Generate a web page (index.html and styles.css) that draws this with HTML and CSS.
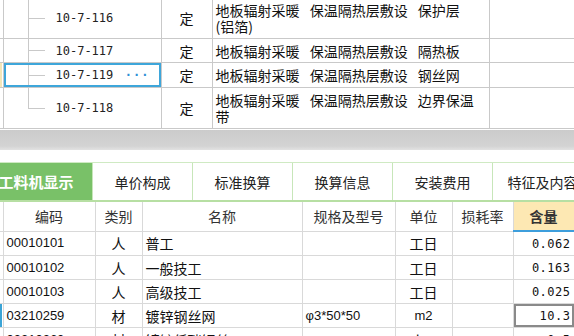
FILE: index.html
```html
<!DOCTYPE html>
<html lang="zh-CN">
<head>
    <meta charset="UTF-8">
    <title>定额子目</title>
    <link rel="stylesheet" href="styles.css">
</head>
<body>
    <table class="quota">
        <colgroup>
            <col class="c-mark"><col class="c-code"><col class="c-type"><col class="c-name"><col class="c-rest">
        </colgroup>
        <tr class="tall">
            <td class="mark"></td>
            <td class="code">10-7-116</td>
            <td class="type">定</td>
            <td class="name">地板辐射采暖 保温隔热层敷设 保护层<br>(铝箔)</td>
            <td></td>
        </tr>
        <tr class="r24">
            <td class="mark"></td>
            <td class="code">10-7-117</td>
            <td class="type">定</td>
            <td class="name">地板辐射采暖 保温隔热层敷设 隔热板</td>
            <td></td>
        </tr>
        <tr class="r25 current">
            <td class="mark"></td>
            <td class="code"><div class="code-box"><span>10-7-119</span><span class="more">···</span></div></td>
            <td class="type">定</td>
            <td class="name">地板辐射采暖 保温隔热层敷设 钢丝网</td>
            <td></td>
        </tr>
        <tr class="tall last">
            <td class="mark"></td>
            <td class="code">10-7-118</td>
            <td class="type">定</td>
            <td class="name">地板辐射采暖 保温隔热层敷设 边界保温<br>带</td>
            <td></td>
        </tr>
    </table>

    <div class="splitter"></div>

    <div class="tabs">
        <div class="tab active first">工料机显示</div>
        <div class="tab">单价构成</div>
        <div class="tab">标准换算</div>
        <div class="tab">换算信息</div>
        <div class="tab">安装费用</div>
        <div class="tab">特征及内容</div>
    </div>

    <table class="res">
        <colgroup>
            <col class="k-mark"><col class="k-code"><col class="k-type"><col class="k-name"><col class="k-spec"><col class="k-unit"><col class="k-loss"><col class="k-qty">
        </colgroup>
        <tr class="head">
            <td class="mark"></td>
            <td>编码</td>
            <td>类别</td>
            <td>名称</td>
            <td>规格及型号</td>
            <td>单位</td>
            <td>损耗率</td>
            <td class="qty-head">含量</td>
        </tr>
        <tr>
            <td class="mark"></td>
            <td class="num">00010101</td>
            <td class="mid">人</td>
            <td>普工</td>
            <td></td>
            <td class="mid">工日</td>
            <td></td>
            <td class="qty">0.062</td>
        </tr>
        <tr>
            <td class="mark"></td>
            <td class="num">00010102</td>
            <td class="mid">人</td>
            <td>一般技工</td>
            <td></td>
            <td class="mid">工日</td>
            <td></td>
            <td class="qty">0.163</td>
        </tr>
        <tr>
            <td class="mark"></td>
            <td class="num">00010103</td>
            <td class="mid">人</td>
            <td>高级技工</td>
            <td></td>
            <td class="mid">工日</td>
            <td></td>
            <td class="qty">0.025</td>
        </tr>
        <tr>
            <td class="mark on"></td>
            <td class="num">03210259</td>
            <td class="mid">材</td>
            <td>镀锌钢丝网</td>
            <td class="num">φ3*50*50</td>
            <td class="mid num">m2</td>
            <td></td>
            <td class="qty picked">10.3</td>
        </tr>
        <tr>
            <td class="mark"></td>
            <td class="num">03210260</td>
            <td class="mid">材</td>
            <td>镀锌低碳钢丝</td>
            <td></td>
            <td class="mid">kg</td>
            <td></td>
            <td class="qty">0.5</td>
        </tr>
    </table>
</body>
</html>
```

FILE: styles.css
```css
body {
    margin: 0;
    width: 574px;
    height: 336px;
    overflow: hidden;
    background: #ffffff;
    font-family: "Noto Sans CJK SC", "DejaVu Sans", sans-serif;
    font-size: 14px;
    color: #111111;
}

table {
    border-collapse: collapse;
    table-layout: fixed;
}

td {
    padding: 0 3px;
    white-space: nowrap;
    overflow: hidden;
}

/* upper grid: quota items */
.quota {
    width: 590px;
    margin-top: -3px;
}

.quota td {
    border: 1px solid #c9c9c9;
    line-height: 16px;
}

.quota td.mark {
    border-left: none;
    padding: 0;
}

.c-mark { width: 3px; }
.c-code { width: 158px; }
.c-type { width: 51px; }
.c-name { width: 277px; }
.c-rest { width: 101px; }

.quota tr.tall { height: 41px; }
.quota tr.r24 { height: 24px; }
.quota tr.r25 { height: 25px; }

.quota td.code {
    font-family: "DejaVu Sans Mono", monospace;
    font-size: 12px;
    color: #222222;
    padding-left: 52px;
    background:
        linear-gradient(#c9c9c9, #c9c9c9) 24px 0 / 1px 100% no-repeat,
        linear-gradient(#c9c9c9, #c9c9c9) 24px 50% / 17px 1px no-repeat;
}

.quota tr.last td.code {
    background:
        linear-gradient(#c9c9c9, #c9c9c9) 24px 0 / 1px 50% no-repeat,
        linear-gradient(#c9c9c9, #c9c9c9) 24px 50% / 17px 1px no-repeat;
}

.quota tr.current td.code {
    box-shadow: inset 0 0 0 2px #3ea6da;
}

.quota tr.current td.mark {
    background: linear-gradient(90deg, #f4e6b8 0 2px, transparent 2px);
}

.code-box {
    display: flex;
    justify-content: space-between;
    padding-right: 8px;
}

.more {
    color: #2f8fd6;
    font-weight: bold;
    letter-spacing: 1px;
}

.quota td.type {
    text-align: center;
}

.quota td.name {
    white-space: normal;
    padding-left: 3px;
    word-spacing: 7px;
}

.splitter {
    height: 20px;
    margin-top: 1px;
    background: linear-gradient(#cbcbcb, #d3d3d3 80%, #e2e2e2);
}

/* tab strip */
.tabs {
    display: flex;
    margin-top: 12px;
    height: 37px;
    border-top: 1px solid #cfeac3;
    border-bottom: 2px solid #b7dfa3;
}

.tab {
    flex: 0 0 100px;
    display: flex;
    align-items: center;
    justify-content: center;
    border-left: 1px solid #c7e6b9;
    color: #222222;
    box-sizing: border-box;
}

.tab.first {
    flex-basis: 112px;
    margin-left: -20px;
    border-left: none;
}

.tab.active {
    background: #79c168;
    color: #ffffff;
    font-weight: bold;
    font-size: 15px;
}

/* lower grid: resources */
.res {
    width: 574px;
}

.res td {
    border: 1px solid #d9d9d9;
    height: 23px;
    line-height: 18px;
}

.res td.mark {
    border-left: none;
    padding: 0;
}

.k-mark { width: 3px; }
.k-code { width: 92px; }
.k-type { width: 47px; }
.k-name { width: 160px; }
.k-spec { width: 93px; }
.k-unit { width: 57px; }
.k-loss { width: 61px; }
.k-qty { width: 61px; }

.res tr.head td {
    height: 28px;
    text-align: center;
    color: #333333;
    border-top: none;
}

.res td.qty-head {
    background: #fde8b3;
    font-weight: bold;
    color: #111111;
    border-bottom: 2px solid #3d9edc;
}

.res td.num {
    font-family: "Liberation Sans", Arial, sans-serif;
    font-size: 13px;
}

.res td.mid {
    text-align: center;
}

.res td.qty {
    text-align: right;
    font-family: "DejaVu Sans Mono", monospace;
    font-size: 12px;
    letter-spacing: 0.5px;
}

.res td.mark.on {
    background: linear-gradient(90deg, #3ba4d6 0 2px, transparent 2px);
}

.res td.picked {
    box-shadow: inset 0 0 0 2px #8a8a8a;
}
```
